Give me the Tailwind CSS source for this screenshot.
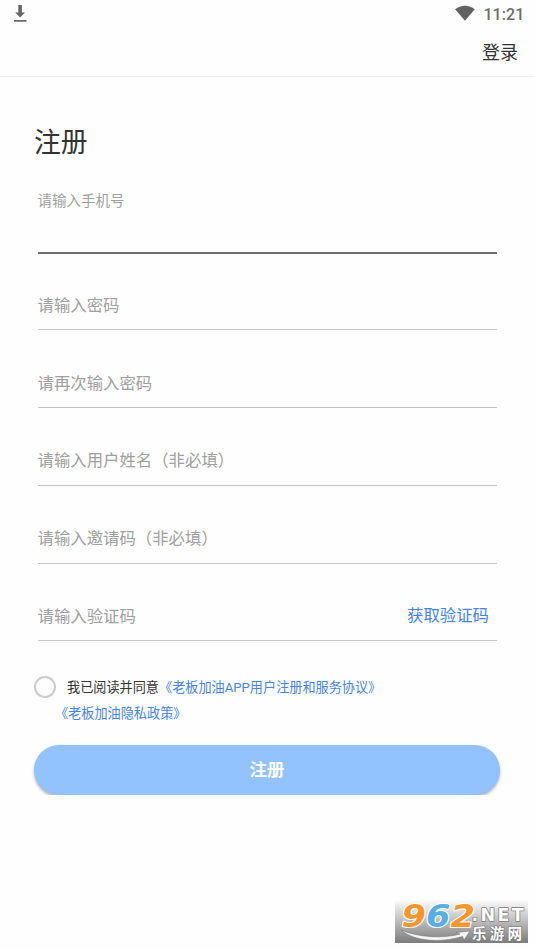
<!DOCTYPE html>
<html lang="zh-CN">
<head>
<meta charset="utf-8">
<meta name="viewport" content="width=device-width, initial-scale=1">
<title>注册</title>
<script src="https://cdn.jsdelivr.net/npm/@tailwindcss/browser@4"></script>
</head>
<body class="bg-[#fefefe]">
<div class="relative flex h-[949px] w-[534px] flex-col overflow-hidden bg-[#fefefe] font-[Roboto,'Noto_Sans_CJK_SC',sans-serif] text-[#333]">
  <div class="flex h-7 shrink-0 items-center justify-between pr-[9.500px] pl-[13px]">
    <svg class="h-5 w-[14px]" viewBox="0 0 14 20" fill="#666"><path d="M5.300 1h3.600v7.500h3.100L7.100 13.500 2.300 8.500h3zM1 16h12.500v1.700H1z"/></svg>
    <div class="flex items-center gap-2">
      <svg class="h-5 w-5" viewBox="0 0 20 20" fill="#636363"><path d="M.1 5.300C5.800.5 14 .5 19.800 5.300L10 16.800z"/></svg>
      <span class="pt-px text-[16px] leading-7 font-medium tracking-[.1px] text-[#6c6c6c]">11:21</span>
    </div>
  </div>
  <header class="flex h-[49px] shrink-0 items-center justify-end border-b border-[#eeeeee] pr-4 text-[18px]">
    <a class="pt-[2px] leading-[46px]">登录</a>
  </header>
  <main class="flex flex-col pr-[34px] pl-[34px]">
    <h1 class="mt-[46px] h-10 text-[26.800px] leading-10">注册</h1>
    <form class="mx-[3.500px] flex flex-col text-[16.400px] text-[#a0a0a0]">
      <label class="flex h-[91px] flex-col border-b-2 border-[#6c6c6c] pt-[27px] text-[14.500px] leading-6">请输入手机号</label>
      <label class="flex h-[76px] items-end border-b border-[#c8c8c8] pb-[11px] leading-6">请输入密码</label>
      <label class="flex h-[78px] items-end border-b border-[#c4c4c4] pb-[11px] leading-6">请再次输入密码</label>
      <label class="flex h-[78px] items-end border-b border-[#c4c4c4] pb-[12px] leading-6">请输入用户姓名（非必填）</label>
      <label class="flex h-[78px] items-end border-b border-[#c8c8c8] pb-[12px] leading-6">请输入邀请码（非必填）</label>
      <div class="flex h-[77px] items-end justify-between border-b border-[#c8c8c8] pr-[7.500px] pb-[11px] leading-6">
        <label>请输入验证码</label>
        <a class="pb-px text-[#4683e8]">获取验证码</a>
      </div>
    </form>
    <div class="mt-[33px] flex h-[26px] items-center text-[13.150px]">
      <span class="size-[22px] shrink-0 rounded-full border-2 border-[#cccccc]"></span>
      <p class="ml-[11px] pt-[2px] whitespace-nowrap">我已阅读并同意<a class="text-[#4683e8]">《老板加油APP用户注册和服务协议》</a></p>
    </div>
    <a class="ml-[21px] h-[26px] pt-px text-[13.150px] leading-[26px] text-[#4683e8]">《老板加油隐私政策》</a>
    <div class="-mx-2 mt-[14px] overflow-hidden px-2 pt-[4.500px]">
      <button class="block h-[50.500px] w-full rounded-full bg-[#93c3ff] pt-px text-[17.500px] font-bold text-white shadow-[0_2px_3px_rgba(0,0,0,0.3)]">注册</button>
    </div>
  </main>
  <svg class="absolute top-[900px] left-[395px] h-[43px] w-[133px] overflow-visible" viewBox="0 0 133 43">
    <defs>
      <linearGradient id="shade" x1="0" y1="0" x2="0" y2="1"><stop offset="0" stop-color="#fcfcfc"/><stop offset=".3" stop-color="#d5d5d5"/><stop offset="1" stop-color="#7c7c7c"/></linearGradient>
    </defs>
    <path d="M0 0h133v43H0z" fill="url(#shade)"/>
    <path d="M6 30C22 37 48 39 65 34l-4-1.500L75 31l-6 9-1.500-3.500C46 43 20 42 6 30z" fill="#f4f4f4" stroke="#777" stroke-width=".6"/>
    <g font-family="DejaVu Sans, sans-serif" font-weight="bold" paint-order="stroke" stroke-linejoin="round">
      <text transform="translate(6.500 26.500) scale(1.100 1)" font-size="32" font-style="italic" stroke="#fff" stroke-width="2.200"><tspan fill="#f7962d">9</tspan><tspan fill="#55aee4">6</tspan><tspan fill="#f7962d">2</tspan></text>
      <text x="76.500" y="20.500" font-size="17.500" letter-spacing="2.300" fill="#fff" stroke="#777" stroke-width="1.400">.NET</text>
    </g>
    <text x="77" y="38.500" font-family="Noto Sans CJK SC, sans-serif" font-size="14.500" font-weight="bold" letter-spacing="3.300" fill="#fff" stroke="#777" stroke-width="1.200" paint-order="stroke">乐游网</text>
  </svg>
</div>
</body>
</html>
